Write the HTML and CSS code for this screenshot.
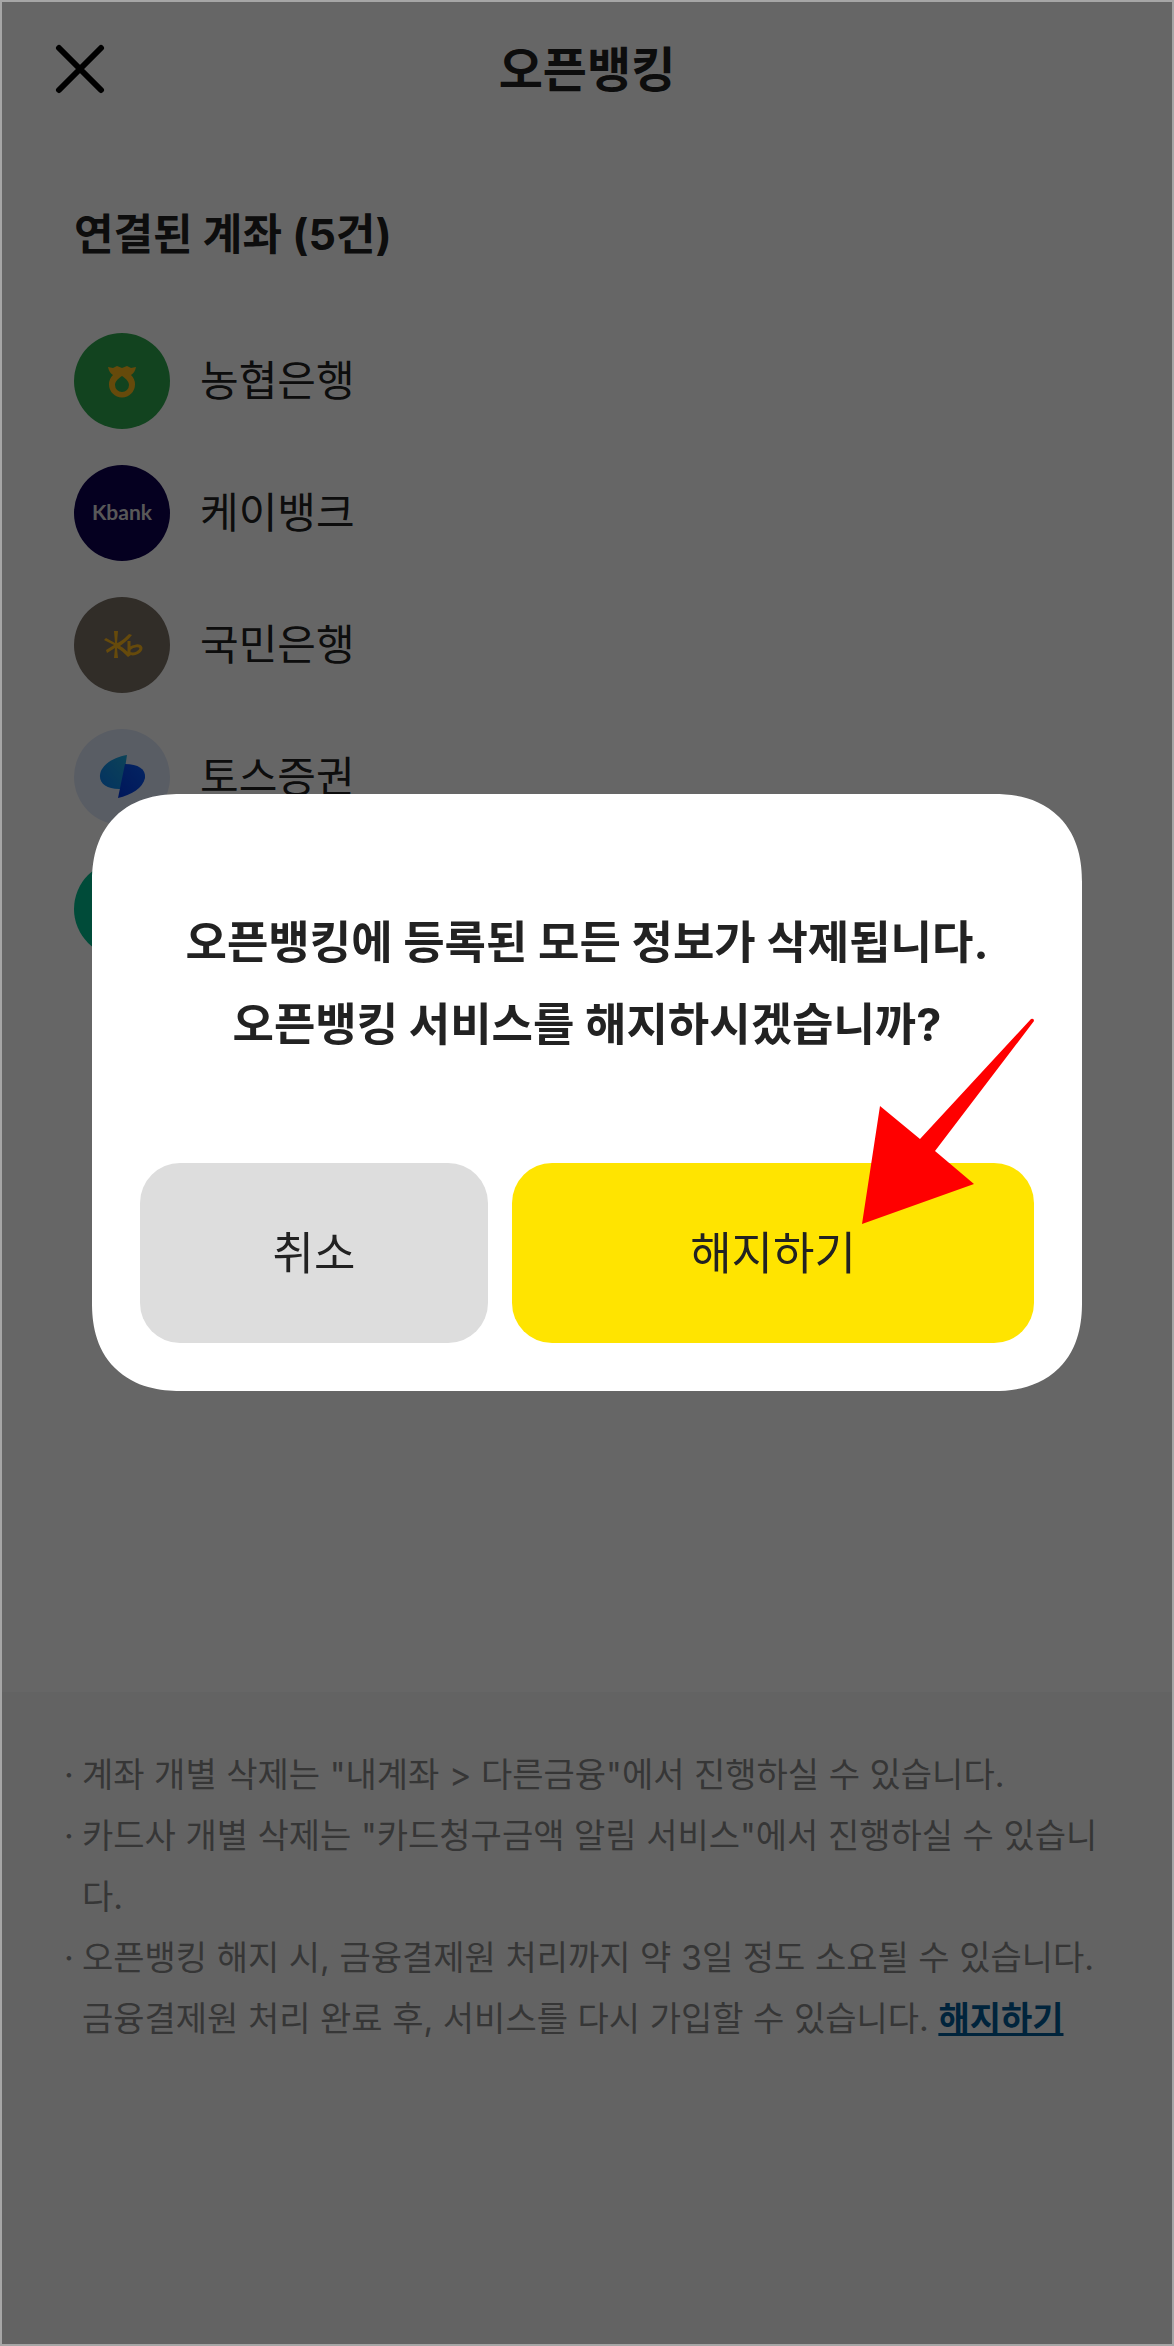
FILE: index.html
```html
<!DOCTYPE html>
<html lang="ko">
<head>
    <meta charset="UTF-8">
    <meta name="viewport" content="width=device-width, initial-scale=1.0">
    <title>오픈뱅킹</title>
    <link rel="stylesheet" href="styles.css">
</head>
<body>
    <div class="page">
        <header class="header">
            <button class="close-btn" type="button" aria-label="닫기">
                <svg viewBox="0 0 52 52" width="52" height="52">
                    <path d="M5 4L47 46M47 4L5 46" stroke="#000" stroke-width="6" stroke-linecap="round"/>
                </svg>
            </button>
            <h1>오픈뱅킹</h1>
        </header>

        <main class="accounts">
            <h2>연결된 계좌 (5건)</h2>
            <ul class="bank-list">
                <li>
                    <svg class="bank-icon" viewBox="0 0 96 96">
                        <circle cx="48" cy="48" r="48" fill="#2fa84f"/>
                        <path fill="#ffb81c" fill-rule="evenodd" d="M34 34L39 35L43 33L48 35L53 33L57 35L62 34C61 38 60 40 57 42A13 13 0 1 1 39 42C36 40 35 38 34 34ZM48 43C45 45 41 48 41 52A7 7 0 0 0 55 52C55 48 51 45 48 43Z"/>
                    </svg>
                    <span>농협은행</span>
                </li>
                <li>
                    <svg class="bank-icon" viewBox="0 0 96 96">
                        <circle cx="48" cy="48" r="48" fill="#0d0050"/>
                        <text class="kbank" x="48" y="55" text-anchor="middle">Kbank</text>
                    </svg>
                    <span>케이뱅크</span>
                </li>
                <li>
                    <svg class="bank-icon" viewBox="0 0 96 96">
                        <circle cx="48" cy="48" r="48" fill="#7a7065"/>
                        <path fill="#ffb81c" d="M40 34H44L43 46C47 45 52 40 55 37L58 38C54 43 50 46 46 49C50 51 54 55 57 58L54 60C50 56 47 53 43 51L44 61H40L41 51L33 56L32 53L40 48L30 43L32 41L41 46Z"/>
                        <path d="M55 44V56C61 59 67 54 67 51C66 48 60 48 55 52" fill="none" stroke="#ffb81c" stroke-width="3"/>
                    </svg>
                    <span>국민은행</span>
                </li>
                <li>
                    <svg class="bank-icon" viewBox="0 0 96 96">
                        <defs>
                            <linearGradient id="leaf-left" x1="0" y1="1" x2="1" y2="0">
                                <stop offset="0" stop-color="#0a7cf0"/>
                                <stop offset="1" stop-color="#1fa8dc"/>
                            </linearGradient>
                            <linearGradient id="leaf-right" x1="1" y1="0" x2="0" y2="1">
                                <stop offset="0" stop-color="#0a5cf5"/>
                                <stop offset="1" stop-color="#0038e0"/>
                            </linearGradient>
                        </defs>
                        <circle cx="48" cy="48" r="48" fill="#dfe8fa"/>
                        <path d="M53 26L48 60C34 61 25 55 26 46C27 36 40 28 53 26Z" fill="url(#leaf-left)"/>
                        <path d="M51 35C64 35 72 40 71 49C69 59 57 66 44 69Z" fill="url(#leaf-right)"/>
                    </svg>
                    <span>토스증권</span>
                </li>
                <li>
                    <svg class="bank-icon" viewBox="0 0 96 96">
                        <circle cx="48" cy="48" r="48" fill="#00bb8e"/>
                    </svg>
                </li>
            </ul>
        </main>

        <footer class="notice">
            <ul>
                <li><p>계좌 개별 삭제는 "내계좌 &gt; 다른금융"에서 진행하실 수 있습니다.</p></li>
                <li><p>카드사 개별 삭제는 "카드청구금액 알림 서비스"에서 진행하실 수 있습니다.</p></li>
                <li>
                    <div>
                        <p>오픈뱅킹 해지 시, 금융결제원 처리까지 약 3일 정도 소요될 수 있습니다.</p>
                        <p>금융결제원 처리 완료 후, 서비스를 다시 가입할 수 있습니다. <a href="#">해지하기</a></p>
                    </div>
                </li>
            </ul>
        </footer>
    </div>

    <div class="overlay">
        <div class="modal" role="dialog" aria-modal="true" aria-labelledby="modal-msg">
            <p id="modal-msg">오픈뱅킹에 등록된 모든 정보가 삭제됩니다.<br>오픈뱅킹 서비스를 해지하시겠습니까?</p>
            <div class="modal-btns">
                <button class="btn btn-cancel" type="button">취소</button>
                <button class="btn btn-confirm" type="button">해지하기</button>
            </div>
            <svg class="arrow" viewBox="0 0 172 208" width="172" height="208">
                <path d="M169 1Q172 0 172 3L73 133L112 166L0 206L18 88L58 121Z" fill="#f00"/>
            </svg>
        </div>
    </div>
</body>
</html>
```
FILE: styles.css
```css
* {
    box-sizing: border-box;
    padding: 0;
    margin: 0;
}
body {
    font-family: Inter, "Noto Sans CJK KR", sans-serif;
    color: #222;
    background: #fff;
}
ul {
    list-style: none;
}
button {
    font-family: inherit;
    color: inherit;
    border: none;
    cursor: pointer;
}
.page {
    min-height: 100vh;
    display: flex;
    flex-direction: column;
}
.header {
    height: 140px;
    padding: 0 54px;
    display: grid;
    grid-template-columns: 52px 1fr 52px;
    align-items: center;
}
.header h1 {
    font-size: 48px;
    line-height: 64px;
    font-weight: 700;
    text-align: center;
}
.close-btn {
    width: 52px;
    height: 52px;
    background: none;
}
.close-btn svg {
    display: block;
}

.accounts {
    flex-grow: 1;
    padding: 64px 74px;
}
.accounts h2 {
    font-size: 43px;
    line-height: 60px;
    font-weight: 700;
}
.bank-list {
    margin-top: 69px;
    display: flex;
    flex-direction: column;
    gap: 36px;
}
.bank-list li {
    display: flex;
    align-items: center;
    gap: 30px;
    font-size: 42px;
    line-height: 60px;
}
.bank-icon {
    width: 96px;
    height: 96px;
}
.kbank {
    font-family: Lato, sans-serif;
    font-size: 21px;
    font-weight: 700;
    fill: #ddd;
}

.notice {
    min-height: 654px;
    padding: 52px 64px;
    background: #f8f8f8;
    color: #888;
    font-size: 34px;
    line-height: 61px;
}
.notice li {
    display: flex;
    word-break: break-all;
}
.notice li::before {
    content: "·";
    flex: 0 0 18px;
}
.notice a {
    color: #005a96;
    font-weight: 700;
    text-underline-offset: 2px;
}

.overlay {
    position: fixed;
    inset: 0;
    background: rgba(0, 0, 0, 0.6);
    border: 2px solid #a6a6a6;
    display: flex;
    align-items: center;
    justify-content: center;
    padding: 0 90px 162px;
}
.modal {
    position: relative;
    width: 100%;
    background: #fff;
    border-radius: 88px;
    corner-shape: superellipse(1.2);
    padding: 108px 48px 48px;
}
.modal p {
    font-size: 45px;
    line-height: 82px;
    font-weight: 700;
    text-align: center;
}
.modal-btns {
    margin-top: 97px;
    display: grid;
    grid-template-columns: 2fr 3fr;
    gap: 24px;
}
.btn {
    height: 180px;
    padding-bottom: 4px;
    border-radius: 40px;
    font-size: 45px;
}
.btn-cancel {
    background: #ddd;
}
.btn-confirm {
    background: #ffe400;
}
.arrow {
    position: absolute;
    right: 48px;
    bottom: 165px;
    pointer-events: none;
}
```
